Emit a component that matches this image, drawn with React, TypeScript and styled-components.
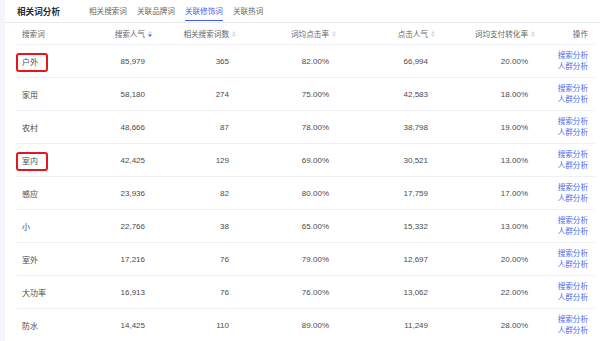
import React from 'react';
import styled, { createGlobalStyle } from 'styled-components';

const GlobalStyle = createGlobalStyle`
  html, body {
    margin: 0;
    padding: 0;
    background: #f4f5f8;
    font-family: "Liberation Sans", "Noto Sans CJK SC", sans-serif;
    overflow: hidden;
  }
`;

type Row = {
  word: string;
  hot: string;
  related: string;
  ctr: string;
  clicks: string;
  cvr: string;
  marked?: boolean;
};

const rows: Row[] = [
  { word: '户外', hot: '85,979', related: '365', ctr: '82.00%', clicks: '66,994', cvr: '20.00%', marked: true },
  { word: '家用', hot: '58,180', related: '274', ctr: '75.00%', clicks: '42,583', cvr: '18.00%' },
  { word: '农村', hot: '48,666', related: '87', ctr: '78.00%', clicks: '38,798', cvr: '19.00%' },
  { word: '室内', hot: '42,425', related: '129', ctr: '69.00%', clicks: '30,521', cvr: '13.00%', marked: true },
  { word: '感应', hot: '23,936', related: '82', ctr: '80.00%', clicks: '17,759', cvr: '17.00%' },
  { word: '小', hot: '22,766', related: '38', ctr: '65.00%', clicks: '15,332', cvr: '13.00%' },
  { word: '室外', hot: '17,216', related: '76', ctr: '79.00%', clicks: '12,697', cvr: '20.00%' },
  { word: '大功率', hot: '16,913', related: '76', ctr: '76.00%', clicks: '13,062', cvr: '22.00%' },
  { word: '防水', hot: '14,425', related: '110', ctr: '89.00%', clicks: '11,249', cvr: '28.00%' },
];

const tabs = ['相关搜索词', '关联品牌词', '关联修饰词', '关联热词'];

const columns = [
  { title: '搜索词', width: 70, sort: null },
  { title: '搜索人气', width: 65, sort: 'active' },
  { title: '相关搜索词数', width: 84, sort: 'idle' },
  { title: '词均点击率', width: 100, sort: 'idle' },
  { title: '点击人气', width: 99, sort: 'idle' },
  { title: '词均支付转化率', width: 100, sort: 'idle' },
  { title: '操作', width: 60, sort: null },
];

function SortIcon({ active }: { active: boolean }) {
  return (
    <SortMark width="4" height="6" viewBox="0 0 4 6">
      <path d="M2 0 L4 2.6 L0 2.6 Z" fill={active ? '#c9d2f5' : '#d3d8e3'} />
      <path d="M0 3.4 L4 3.4 L2 6 Z" fill={active ? '#3f63f0' : '#d3d8e3'} />
    </SortMark>
  );
}

export default function App() {
  return (
    <>
      <GlobalStyle />
      <Page>
        <Card>
          <Header>
            <Title>相关词分析</Title>
            <Tabs>
              {tabs.map((t, i) => (
                <Tab key={t} $active={i === 2}>
                  {t}
                </Tab>
              ))}
            </Tabs>
          </Header>
          <TableWrap>
            <Table>
              <colgroup>
                {columns.map((c) => (
                  <col key={c.title} style={{ width: c.width }} />
                ))}
              </colgroup>
              <thead>
                <tr>
                  {columns.map((c, i) => (
                    <Th key={c.title} $left={i === 0}>
                      {c.title}
                      {c.sort && <SortIcon active={c.sort === 'active'} />}
                    </Th>
                  ))}
                </tr>
              </thead>
              <tbody>
                {rows.map((r) => (
                  <tr key={r.word}>
                    <Td $left>
                      {r.marked ? <Marked>{r.word}</Marked> : r.word}
                    </Td>
                    <Td>{r.hot}</Td>
                    <Td>{r.related}</Td>
                    <Td>{r.ctr}</Td>
                    <Td>{r.clicks}</Td>
                    <Td>{r.cvr}</Td>
                    <Td>
                      <Actions>
                        <ActionLink>搜索分析</ActionLink>
                        <ActionLink>人群分析</ActionLink>
                      </Actions>
                    </Td>
                  </tr>
                ))}
              </tbody>
            </Table>
          </TableWrap>
        </Card>
      </Page>
    </>
  );
}

const Page = styled.div`
  width: 600px;
  height: 341px;
  padding-left: 5px;
  box-sizing: border-box;
  overflow: hidden;
`;

const Card = styled.div`
  background: #fff;
  height: 100%;
`;

const Header = styled.div`
  display: flex;
  align-items: center;
  height: 22px;
  padding-left: 12px;
  border-bottom: 1px solid #e9ebef;
`;

const Title = styled.div`
  font-size: 8.6px;
  font-weight: 700;
  color: #2a2a2a;
  margin-right: 29px;
`;

const Tabs = styled.div`
  display: flex;
  gap: 10px;
  height: 100%;
`;

const Tab = styled.div<{ $active?: boolean }>`
  display: flex;
  align-items: center;
  font-size: 7.6px;
  color: ${(p) => (p.$active ? '#3f63f0' : '#666')};
  border-bottom: 1.5px solid ${(p) => (p.$active ? '#3f63f0' : 'transparent')};
  box-sizing: border-box;
  height: 21px;
`;

const TableWrap = styled.div`
  padding-left: 12px;
  width: 578px;
`;

const Table = styled.table`
  width: 578px;
  border-collapse: collapse;
  table-layout: fixed;
`;

const Th = styled.th<{ $left?: boolean }>`
  height: 21px;
  padding: 0 7px 0 5px;
  font-size: 7.6px;
  font-weight: 400;
  color: #666;
  text-align: ${(p) => (p.$left ? 'left' : 'right')};
  border-bottom: 1px solid #eef0f3;
  white-space: nowrap;
`;

const SortMark = styled.svg`
  margin-left: 3px;
  margin-right: -7px;
  vertical-align: 0;
`;

const Td = styled.td<{ $left?: boolean }>`
  height: 32px;
  padding: 0 7px 0 5px;
  font-size: 8px;
  color: #4a4a4a;
  text-align: ${(p) => (p.$left ? 'left' : 'right')};
  border-bottom: 1px solid #eef0f3;
  white-space: nowrap;
`;

const Marked = styled.span`
  position: relative;
  &::after {
    content: '';
    position: absolute;
    left: -6px;
    right: -10px;
    top: -5px;
    bottom: -5px;
    border: 2px solid #e5161d;
    border-radius: 3px;
  }
`;

const Actions = styled.div`
  display: flex;
  flex-direction: column;
  align-items: flex-end;
  line-height: 11px;
`;

const ActionLink = styled.a`
  font-size: 7.6px;
  color: #4a6cf2;
  cursor: pointer;
`;
